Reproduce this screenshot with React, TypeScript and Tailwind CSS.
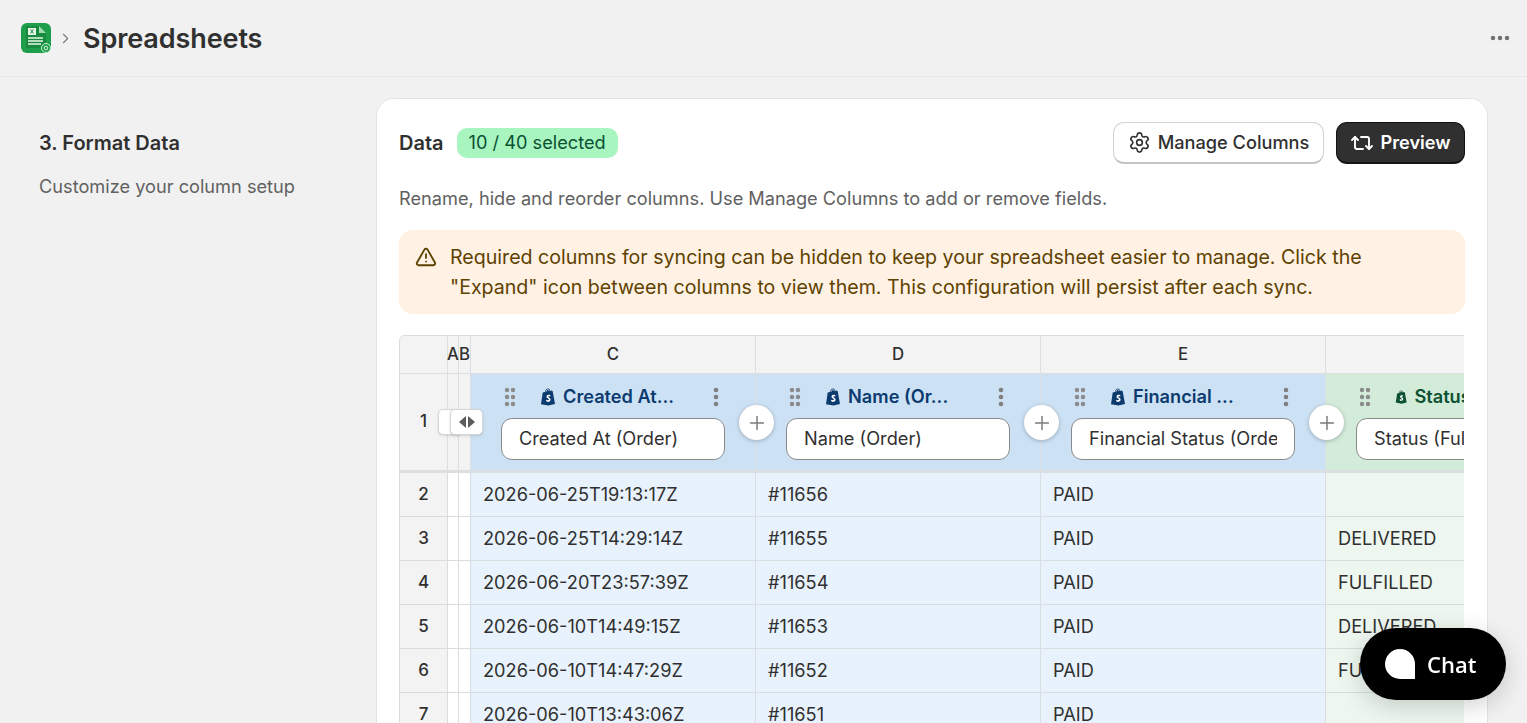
import { Settings, Repeat2, TriangleAlert, GripVertical, Plus, EllipsisVertical, Ellipsis, ChevronRight } from "lucide-react";
import { ReactNode } from "react";

type Col = {
  letter: string;
  title: string;
  value: string;
  green?: boolean;
};

const columns: Col[] = [
  { letter: "C", title: "Created At...", value: "Created At (Order)" },
  { letter: "D", title: "Name (Or...", value: "Name (Order)" },
  { letter: "E", title: "Financial ...", value: "Financial Status (Order)" },
  { letter: "F", title: "Status (Fulfillment)", value: "Status (Fulfillment)", green: true },
];

const rows = [
  { n: 2, c: "2026-06-25T19:13:17Z", d: "#11656", e: "PAID", f: "" },
  { n: 3, c: "2026-06-25T14:29:14Z", d: "#11655", e: "PAID", f: "DELIVERED" },
  { n: 4, c: "2026-06-20T23:57:39Z", d: "#11654", e: "PAID", f: "FULFILLED" },
  { n: 5, c: "2026-06-10T14:49:15Z", d: "#11653", e: "PAID", f: "DELIVERED" },
  { n: 6, c: "2026-06-10T14:47:29Z", d: "#11652", e: "PAID", f: "FULFILLED" },
  { n: 7, c: "2026-06-10T13:43:06Z", d: "#11651", e: "PAID", f: "" },
];

function SheetIcon() {
  return (
    <svg width="30" height="30" viewBox="0 0 30 30">
      <rect width="30" height="30" rx="6" fill="#1e9e4a" />
      <path d="M5 3h13l7 7v13a2 2 0 0 1-2 2H5z" fill="#178a3e" />
      <path d="M18 3l7 7h-7z" fill="#9fdcae" />
      <rect x="7" y="5" width="8" height="7" fill="#e8f7ec" />
      <path d="M9.5 6.5l3 4M12.5 6.5l-3 4" stroke="#178a3e" strokeWidth="1" />
      <path d="M7 15h15M7 18h15M7 21h13" stroke="#e8f7ec" strokeWidth="1.4" />
      <circle cx="25" cy="25" r="4.5" fill="#1e9e4a" stroke="#c9efd4" strokeWidth="1" />
      <circle cx="25" cy="25" r="1.8" fill="none" stroke="#e8f7ec" strokeWidth="0.9" />
    </svg>
  );
}

function ShopifyBag({ color }: { color: string }) {
  return (
    <svg width="16" height="18" viewBox="0 0 16 18">
      <path d="M1 16.2 2.7 4.6l2.2-.7C5.4 2 6.5.6 8 .6c1.3 0 2 1 2.3 2.3l1.4-.3 1 .6L15 16l-6.5 1.6z" fill={color} />
      <path d="M6 3.7c.3-1.2.9-2.1 1.8-2.1.8 0 1.2.7 1.4 1.5" fill="none" stroke="white" strokeWidth="0.8" />
      <path d="M10.3 7.2c-.5-.3-1-.4-1.6-.4-1.4 0-2.2.9-2.2 1.9 0 1.700 2.400 1.600 2.400 2.800 0 .5-.4.8-.9.8-.6 0-1.300-.4-1.600-.6l-.4 1.400c.4.4 1.200.8 2.100.8 1.500 0 2.500-1 2.500-2.300 0-2-2.400-1.900-2.400-2.800 0-.3.2-.6.800-.6.500 0 1 .2 1.300.3z" fill="white" />
    </svg>
  );
}

function Cell({ className, children }: { className: string; children?: ReactNode }) {
  return <div className={`h-11 flex items-center border-b border-[#d9dde0] ${className}`}>{children}</div>;
}

export default function App() {
  return (
    <div className="h-[723px] overflow-hidden bg-[#f1f1f1] text-[#303030] font-['Inter',sans-serif]">
      {/* top bar */}
      <div className="h-[77px] border-b border-[#e8e8e8] flex items-center pl-[21px] pr-[15px]">
        <SheetIcon />
        <ChevronRight className="w-[17px] h-[17px] text-[#7a7a7a] ml-[6px] mr-[9px]" strokeWidth={1.6} />
        <h1 className="text-[27px] font-semibold tracking-[-0.1px] leading-none">Spreadsheets</h1>
        <Ellipsis className="ml-auto w-[24px] h-[24px] text-[#6e6e6e]" strokeWidth={2.4} />
      </div>

      <div className="flex pt-[21px] pl-[39px] pr-[39px]">
        {/* left section */}
        <div className="w-[337px] shrink-0 pt-[31px]">
          <h2 className="text-[20px] leading-[28px] font-semibold">3. Format Data</h2>
          <p className="mt-[15px] text-[18.2px] leading-[28px] text-[#616161]">Customize your column setup</p>
        </div>

        {/* card */}
        <div className="w-[1112px] h-[800px] bg-white rounded-t-[18px] border border-[#e3e3e3] px-[22px] pt-[23px]">
          <div className="flex items-center h-[42px]">
            <span className="text-[20px] font-semibold">Data</span>
            <span className="ml-[13px] h-[30px] px-[12px] rounded-[10px] bg-[#a8f5c0] text-[#0c5132] text-[18.2px] flex items-center">10 / 40 selected</span>
            <button className="ml-auto h-[42px] w-[211px] rounded-[11px] bg-white border border-[#d4d4d4] border-b-[2px] border-b-[#c4c4c4] flex items-center justify-center gap-[7px] text-[18.2px] font-medium">
              <Settings className="w-[23px] h-[23px]" strokeWidth={1.7} />
              Manage Columns
            </button>
            <button className="ml-[12px] h-[42px] w-[129px] rounded-[11px] bg-[#303030] border border-[#141414] border-b-[2px] text-white flex items-center justify-center gap-[6px] text-[18.2px] font-semibold">
              <Repeat2 className="w-[24px] h-[24px]" strokeWidth={1.9} />
              Preview
            </button>
          </div>

          <p className="mt-[20px] text-[18.2px] leading-[28px] text-[#616161]">
            Rename, hide and reorder columns. Use Manage Columns to add or remove fields.
          </p>

          <div className="mt-[18px] h-[84px] rounded-[14px] bg-[#fff1e3] flex pl-[16px] pr-[20px] pt-[12px] text-[#5e4200]">
            <TriangleAlert className="w-[22px] h-[22px] mt-[4px] shrink-0" strokeWidth={2} />
            <p className="ml-[13px] text-[19.6px] leading-[30px]">
              Required columns for syncing can be hidden to keep your spreadsheet easier to manage. Click the
              <br />
              "Expand" icon between columns to view them. This configuration will persist after each sync.
            </p>
          </div>

          {/* sheet */}
          <div className="mt-[21px] w-[1065px] overflow-hidden rounded-tl-[6px] border-t border-l border-[#d9dde0] text-[18.2px] relative">
            <div className="grid grid-cols-[48px_11px_12px_285px_285px_285px_285px]">
              {/* letters */}
              <div className="h-[38px] bg-[#f3f3f3] border-r border-b border-[#dcdfe2]" />
              <div className="h-[38px] bg-[#f3f3f3] border-r border-b border-[#dcdfe2] flex items-center justify-center text-[16.8px] font-medium overflow-visible">A</div>
              <div className="h-[38px] bg-[#f3f3f3] border-r border-b border-[#dcdfe2] flex items-center justify-center text-[16.8px] font-medium overflow-visible">B</div>
              {columns.map((c) => (
                <div key={c.letter} className="h-[38px] bg-[#f3f3f3] border-r border-b border-[#dcdfe2] flex items-center justify-center text-[16.8px] font-medium">
                  {c.green ? "" : c.letter}
                </div>
              ))}

              {/* header row */}
              <div className="h-[99px] bg-[#f3f3f3] border-r border-b-[3px] border-[#dcdfe2] flex items-center justify-center font-medium text-[17px]">1</div>
              <div className="h-[99px] bg-[#f3f3f3] border-r border-b-[3px] border-[#dcdfe2]" />
              <div className="h-[99px] bg-[#f3f3f3] border-r border-b-[3px] border-[#dcdfe2]" />
              {columns.map((c) => (
                <div key={c.letter} className={`h-[99px] border-b-[3px] border-[#dcdfe2] px-[30px] pt-[8px] ${c.green ? "bg-[#d3ebd9]" : "bg-[#cde1f5] border-r"}`}>
                  <div className="flex items-center h-[30px]">
                    <GripVertical className="w-[24px] h-[24px] text-[#8a8a8a] -ml-[3px]" strokeWidth={2.4} />
                    <div className={`ml-[18px] flex-1 min-w-0 flex items-center gap-[7px] text-[18.2px] font-semibold ${c.green ? "text-[#0c5132]" : "text-[#0b3b6f]"}`}>
                      <ShopifyBag color={c.green ? "#0c5132" : "#0b3b6f"} />
                      <span className="whitespace-nowrap">{c.title}</span>
                    </div>
                    {!c.green && <EllipsisVertical className="w-[24px] h-[24px] text-[#7d7d7d] -mr-[3px]" strokeWidth={2.6} />}
                  </div>
                  <div className="mt-[6px] h-[42px] w-[224px] rounded-[11px] bg-white border border-[#8a8a8a] pl-[17px] pr-[17px] flex items-center overflow-hidden">
                    <span className="whitespace-nowrap overflow-hidden">{c.value}</span>
                  </div>
                </div>
              ))}

              {/* data rows */}
              {rows.map((r) => (
                <div key={r.n} className="contents">
                  <Cell className="bg-[#f3f3f3] border-r justify-center font-medium text-[17px]">{r.n}</Cell>
                  <Cell className="bg-white border-r" />
                  <Cell className="bg-white border-r" />
                  <Cell className="bg-[#e8f2fc] border-r pl-[12px]">{r.c}</Cell>
                  <Cell className="bg-[#e8f2fc] border-r pl-[12px]">{r.d}</Cell>
                  <Cell className="bg-[#e8f2fc] border-r pl-[12px]">{r.e}</Cell>
                  <Cell className="bg-[#edf7ef] pl-[12px]">{r.f}</Cell>
                </div>
              ))}
            </div>

            {/* expand handle over the collapsed columns */}
            <div className="absolute left-[38px] top-[73px] w-[24px] h-[26px] rounded-[5px] bg-white border border-[#d5d5d5] shadow-sm" />
            <div className="absolute left-[50px] top-[73px] w-[33px] h-[26px] rounded-[5px] bg-white border border-[#d5d5d5] shadow-sm flex items-center justify-center">
              <svg width="18" height="12" viewBox="0 0 18 12">
                <path d="M8 0v12L1 6z" fill="#5c5c5c" />
                <path d="M10 0v12l7-6z" fill="#5c5c5c" />
              </svg>
            </div>

            {/* add column buttons */}
            {[339, 624, 909].map((x) => (
              <div key={x} style={{ left: x }} className="absolute top-[69px] w-[35px] h-[35px] rounded-full bg-white shadow-[0_1px_4px_rgba(0,0,0,0.25)] flex items-center justify-center">
                <Plus className="w-[22px] h-[22px] text-[#7a7a7a]" strokeWidth={1.6} />
              </div>
            ))}
          </div>
        </div>
      </div>

      {/* chat */}
      <button className="fixed left-[1360px] top-[628px] w-[146px] h-[72px] rounded-full bg-black text-white flex items-center pl-[25px] gap-[12px] shadow-[0_6px_24px_rgba(0,0,0,0.18)] font-['Open_Sans',sans-serif]">
        <span className="w-[30px] h-[30px] bg-white rounded-[15px_15px_0_15px]" />
        <span className="text-[22px] font-semibold">Chat</span>
      </button>
    </div>
  );
}
